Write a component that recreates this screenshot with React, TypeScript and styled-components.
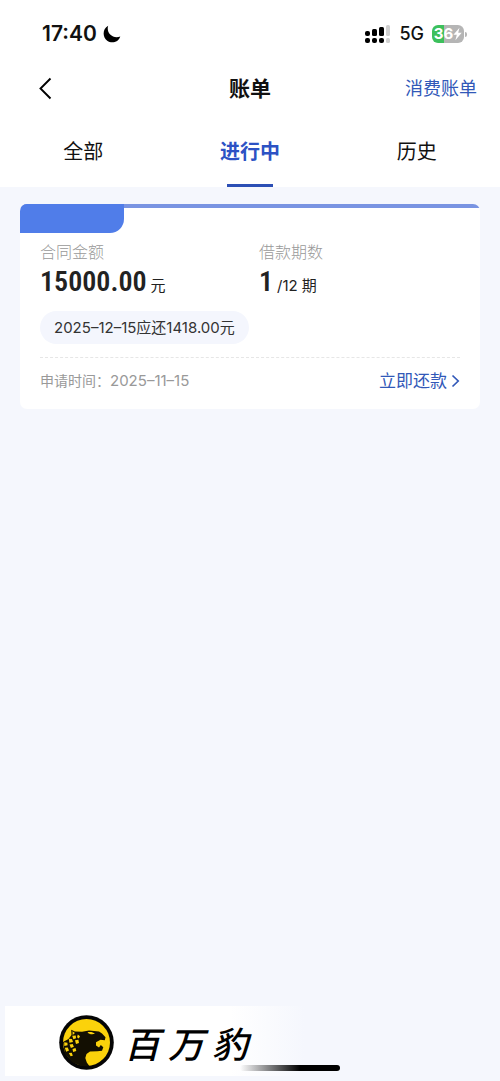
import React from "react";
import styled, { createGlobalStyle } from "styled-components";

const GlobalStyle = createGlobalStyle`
  *, *::before, *::after { box-sizing: border-box; }
  body {
    margin: 0;
    background: #f5f7fd;
    color: #111;
    font-family: Inter, "Noto Sans CJK SC", sans-serif;
  }
  button { font: inherit; border: 0; padding: 0; background: none; cursor: pointer; }
  h1, p, dl, dd { margin: 0; }
`;

const blue = "#3158b8";

const Page = styled.div`
  min-height: 100vh;
  display: flex;
  flex-direction: column;
`;

const Header = styled.header`
  background: #fff;
`;

const StatusBar = styled.div`
  display: flex;
  align-items: center;
  justify-content: space-between;
  height: 64px;
  padding: 4px 33px 0 42px;
`;

const StatusGroup = styled.div<{ $gap: number }>`
  display: flex;
  align-items: center;
  gap: ${(p) => p.$gap}px;
`;

const Clock = styled.span`
  font-size: 21px;
  font-weight: 600;
  line-height: 24px;
`;

const Network = styled.span`
  font-size: 18px;
  font-weight: 500;
  line-height: 24px;
`;

const Battery = styled.div`
  display: flex;
  align-items: center;
  gap: 1px;
`;

const BatteryBody = styled.div`
  display: flex;
  align-items: center;
  justify-content: center;
  width: 32px;
  height: 18px;
  border-radius: 6px;
  background: linear-gradient(90deg, #3cc05c 0 36%, #b5b5b5 36%);
  color: #fff;
  font-size: 15px;
  font-weight: 700;
  line-height: 18px;
`;

const BatteryTip = styled.span`
  width: 2px;
  height: 5px;
  border-radius: 0 2px 2px 0;
  background: #b5b5b5;
`;

const NavBar = styled.div`
  display: grid;
  grid-template-columns: 1fr auto 1fr;
  align-items: center;
  height: 48px;
  padding: 2px 23px 0;
`;

const BackButton = styled.button`
  display: flex;
  justify-self: start;
  padding-left: 15px;
`;

const Title = styled.h1`
  font-size: 21px;
  font-weight: 700;
  line-height: 32px;
`;

const NavLink = styled.a`
  justify-self: end;
  color: ${blue};
  font-size: 18px;
  line-height: 32px;
  text-decoration: none;
`;

const Tabs = styled.nav`
  display: grid;
  grid-template-columns: repeat(3, 1fr);
  height: 75px;
`;

const Tab = styled.button<{ $active?: boolean }>`
  display: flex;
  flex-direction: column;
  align-items: center;
  justify-content: space-between;
  padding-top: 24px;
  color: ${(p) => (p.$active ? "#2c52c4" : "#111")};
  font-size: 20px;
  font-weight: ${(p) => (p.$active ? 700 : 400)};
  line-height: 32px;

  &::after {
    content: "";
    width: 46px;
    height: 3px;
    background: ${(p) => (p.$active ? "#2c4fb5" : "transparent")};
  }
`;

const Main = styled.main`
  flex: 1;
  padding: 17px 20px;
`;

const Card = styled.article`
  overflow: hidden;
  border-radius: 7px;
  background: linear-gradient(#7994e2 0 4px, #fff 4px);
`;

const CardTag = styled.div`
  width: 104px;
  height: 29px;
  border-radius: 0 0 14px 0;
  background: #507de9;
`;

const CardBody = styled.div`
  padding: 7px 20px 0;
`;

const Facts = styled.dl`
  display: grid;
  grid-template-columns: 219px 1fr;
`;

const FactLabel = styled.dt`
  color: #999;
  font-size: 16px;
  font-weight: 300;
  line-height: 24px;
`;

const FactValue = styled.dd`
  display: flex;
  align-items: baseline;
  gap: 4px;
  color: #222;
  font-size: 15px;
  line-height: 36px;
`;

const Figure = styled.span`
  font-family: "Roboto Condensed", "Liberation Sans Narrow", Roboto, sans-serif;
  font-size: 28px;
  font-weight: 600;
`;

const DueNote = styled.p`
  width: fit-content;
  margin-top: 7px;
  padding: 0 14px;
  border-radius: 17px;
  background: #f4f6fd;
  color: #333;
  font-size: 15px;
  line-height: 33px;
`;

const CardFooter = styled.div`
  display: flex;
  align-items: center;
  justify-content: space-between;
  height: 52px;
  margin-top: 13px;
  padding-bottom: 6px;
  border-top: 1px dashed #e6e6e6;
`;

const Applied = styled.span`
  color: #999;
  font-size: 14px;
  line-height: 24px;
`;

const AppliedDate = styled.time`
  font-size: 15px;
`;

const RepayButton = styled.button`
  display: flex;
  align-items: center;
  gap: 4px;
  color: ${blue};
  font-size: 17px;
  line-height: 24px;
`;

const Footer = styled.footer`
  position: relative;
  padding: 0 5px 5px;
`;

const Brand = styled.div`
  display: flex;
  align-items: center;
  gap: 10px;
  width: 300px;
  height: 70px;
  padding: 2px 0 0 54px;
  background: linear-gradient(90deg, #fff 75%, #f5f7fd);
`;

const BrandName = styled.span`
  color: #000;
  font-family: "Noto Sans CJK SC", sans-serif;
  font-size: 36px;
  font-style: italic;
  font-weight: 500;
  letter-spacing: 8px;
  line-height: 48px;
`;

const HomeIndicator = styled.span`
  position: absolute;
  right: 32%;
  bottom: 10px;
  width: 100px;
  height: 6px;
  border-radius: 3px;
  background: linear-gradient(90deg, transparent, #000 60%);
`;

const MoonIcon = () => (
  <svg width="18" height="18" viewBox="0 0 18 18" aria-hidden="true">
    <path d="M5.2.8C-.6 3.6-.8 12.3 4.2 15.8C9 19 15.6 17 17.3 11.4C14 12.8 9.6 12.2 7.2 9.6C4.8 7 4.2 3.6 5.2.8Z" fill="#000" />
  </svg>
);

const SignalIcon = () => (
  <svg width="26" height="18" viewBox="0 0 26 18" aria-hidden="true">
    <g fill="#000">
      <rect x="0" y="6" width="5" height="5" rx="2" />
      <rect x="7" y="4" width="5" height="7" rx="1.5" />
      <rect x="14" y="2" width="5" height="9" rx="1.5" />
      <rect x="0" y="13" width="5" height="5" rx="2" />
      <rect x="7" y="13" width="5" height="5" rx="2" />
      <rect x="14" y="13" width="5" height="5" rx="2" />
    </g>
    <g fill="#d0d0d0">
      <rect x="21" y="0" width="4" height="11" rx="1.5" />
      <rect x="21" y="13" width="4" height="5" rx="1.5" />
    </g>
  </svg>
);

const BoltIcon = () => (
  <svg width="9" height="14" viewBox="0 0 9 14" aria-hidden="true">
    <path d="M6.5.8.4 7.8h3.4L2.4 13.2 8.7 5.8H5.2Z" fill="#fff" />
  </svg>
);

const BackIcon = () => (
  <svg width="16" height="24" viewBox="0 0 16 24" aria-hidden="true">
    <path d="M12.5 1.5 2.5 11.5l10 10" fill="none" stroke="#000" strokeWidth="1.9" />
  </svg>
);

const ArrowIcon = () => (
  <svg width="9" height="14" viewBox="0 0 9 14" aria-hidden="true">
    <path d="M1.5 1.5 7.2 7l-5.7 5.5" fill="none" stroke={blue} strokeWidth="1.7" />
  </svg>
);

const LeopardLogo = () => (
  <svg width="55" height="55" viewBox="0 0 55 55" aria-hidden="true">
    <circle cx="27.5" cy="27.5" r="27.3" fill="#050505" />
    <circle cx="27.5" cy="27.5" r="23.5" fill="#fbd20b" />
    <path
      d="M4 27 9.5 24 12.5 20 12.2 14.8 16 16.4 23 16.8 30 15.5 40 16.5 43 18.5 46.5 22.3 45.8 25.3 41.5 24.8 37 27.2 37 30.6 40 32.6 41.8 29.9 44.3 32.3 43 35.7 38.3 36.3 31 36.6 27.5 39 26.3 43 27.8 47.5 30.5 51.3 22 51 13 47 6 39Z"
      fill="#130f02"
    />
    <path d="M28.5 17.2c3-.6 5.8-.1 7.4 1.6-2.8 1-6 .5-7.4-1.6Z" fill="#fbd20b" />
    <path
      d="M13.5 16.3 16 18l-2.3 2ZM13.2 20.8l3.6-.2.2 2.7-2.6.9ZM18.8 19.5l2.2 1.7-1.2 2.3-1.8-1.3ZM9.8 23.8l3.2.3 1 3-3.6.7ZM16 25.2l3.4-.5.6 3.3-3 .9ZM5.2 27.3l3.2.5.2 2.5-3.3.6ZM10.5 29.5l3.2-.5 1.2 2.8-3 1.2ZM5.8 32.8l3-.4 1.2 3.2-2.8 1.2ZM13.5 34l3-.9.8 2.9-3.2 1ZM9.8 38l3-.3 1 3.1-2.2.4Z"
      fill="#fbd20b"
    />
  </svg>
);

export default function App() {
  return (
    <Page>
      <GlobalStyle />
      <Header>
        <StatusBar>
          <StatusGroup $gap={6}>
            <Clock>17:40</Clock>
            <MoonIcon />
          </StatusGroup>
          <StatusGroup $gap={8}>
            <SignalIcon />
            <Network>5G</Network>
            <Battery>
              <BatteryBody>
                36
                <BoltIcon />
              </BatteryBody>
              <BatteryTip />
            </Battery>
          </StatusGroup>
        </StatusBar>
        <NavBar>
          <BackButton aria-label="返回">
            <BackIcon />
          </BackButton>
          <Title>账单</Title>
          <NavLink href="#consume">消费账单</NavLink>
        </NavBar>
        <Tabs>
          <Tab>全部</Tab>
          <Tab $active aria-current="page">进行中</Tab>
          <Tab>历史</Tab>
        </Tabs>
      </Header>
      <Main>
        <Card>
          <CardTag />
          <CardBody>
            <Facts>
              <div>
                <FactLabel>合同金额</FactLabel>
                <FactValue>
                  <Figure>15000.00</Figure>元
                </FactValue>
              </div>
              <div>
                <FactLabel>借款期数</FactLabel>
                <FactValue>
                  <Figure>1</Figure>
                  <span>/12</span>期
                </FactValue>
              </div>
            </Facts>
            <DueNote>2025–12–15应还1418.00元</DueNote>
            <CardFooter>
              <Applied>
                申请时间：<AppliedDate dateTime="2025-11-15">2025–11–15</AppliedDate>
              </Applied>
              <RepayButton>
                立即还款
                <ArrowIcon />
              </RepayButton>
            </CardFooter>
          </CardBody>
        </Card>
      </Main>
      <Footer>
        <Brand>
          <LeopardLogo />
          <BrandName>百万豹</BrandName>
        </Brand>
        <HomeIndicator />
      </Footer>
    </Page>
  );
}
